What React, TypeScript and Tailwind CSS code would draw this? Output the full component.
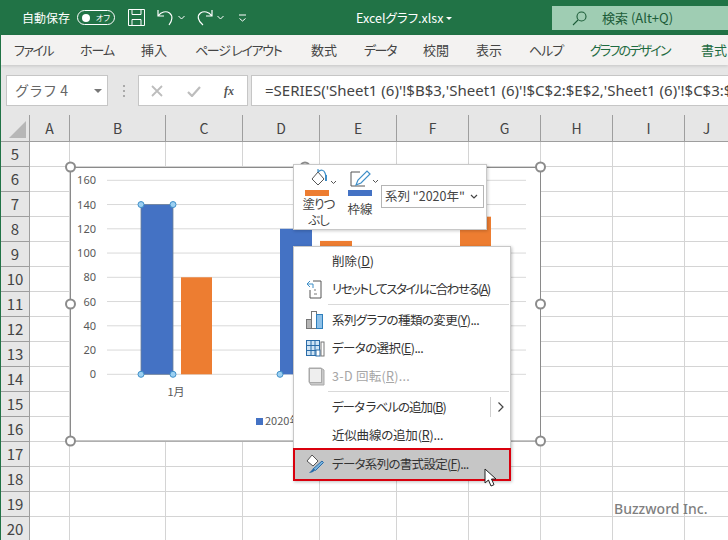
import React from "react";

const jp = "font-['Noto_Sans_CJK_JP','Noto_Sans',sans-serif] [font-feature-settings:'palt']";
const cols: [string, number][] = [["A",40],["B",96],["C",77],["D",77],["E",77],["F",72],["G",72],["H",72],["I",72],["J",44]];
const rows = [5,6,7,8,9,10,11,12,13,14,15,16,17,18,19,20];
const tabs: [string, string][] = [
  ["ファイル","ml-[13px] w-[66px] tracking-[-1.5px]"],["ホーム","w-[61px] tracking-[-1px]"],["挿入","w-[54px]"],["ページ レイアウト","w-[116px] tracking-[-1.3px]"],["数式","w-[53px]"],["データ","w-[59px] tracking-[-1.5px]"],["校閲","w-[53px]"],["表示","w-[53px]"],["ヘルプ","w-[61px] tracking-[-1px]"],
  ["グラフのデザイン","w-[111px] tracking-[-1.800px] text-[#1e6b41]"],["書式","w-[40px] text-[#1e6b41]"],
];

function Handle({x,y}:{x:number;y:number}){
  return <circle cx={x} cy={y} r={4.5} fill="#fff" stroke="#8c8c8c" strokeWidth={2}/>;
}
function Dot({x,y}:{x:number;y:number}){
  return <circle cx={x} cy={y} r={3} fill="#9cd0f2" stroke="#3f8fc8" strokeWidth={1}/>;
}

function Chart(){
  const ys=[0,20,40,60,80,100,120,140,160];
  const y=(v:number)=>374.3-v*1.2125;
  return (
    <svg width={728} height={540} viewBox="0 0 728 540" className="absolute left-0 top-[-141px] pointer-events-none">
      <rect x={70.5} y={167.5} width={470} height={273.5} fill="#fff" stroke="#8a8a8a" strokeWidth={1}/>
      {ys.map(v=><line key={v} x1={107} x2={526} y1={y(v)} y2={y(v)} stroke="#d9d9d9" strokeWidth={1}/>)}
      {ys.map(v=><text key={v} x={96} y={y(v)+4} textAnchor="end" fontSize={11} fill="#595959" fontFamily="'Noto Sans',sans-serif">{v}</text>)}
      <rect x={141} y={y(140)} width={32} height={140*1.2125} fill="#4472c4" stroke="#6d7f99" strokeWidth={0.8}/>
      <rect x={181} y={y(80)} width={31} height={80*1.2125} fill="#ed7d31"/>
      <rect x={280} y={y(120)} width={32} height={120*1.2125} fill="#4472c4"/>
      <rect x={320} y={y(110)} width={32} height={110*1.2125} fill="#ed7d31"/>
      <rect x={460} y={y(130)} width={31} height={130*1.2125} fill="#ed7d31"/>
      <Dot x={141} y={y(140)}/><Dot x={173} y={y(140)}/><Dot x={141} y={y(0)}/><Dot x={173} y={y(0)}/><Dot x={280} y={y(0)}/>
      <text x={176} y={396} textAnchor="middle" fontSize={11} fill="#595959" fontFamily="'Noto Sans CJK JP',sans-serif">1月</text>
      <rect x={256} y={418} width={7} height={7} fill="#4472c4"/>
      <text x={265} y={425} fontSize={11} fill="#595959" fontFamily="'Noto Sans CJK JP',sans-serif">2020年</text>
      <Handle x={70.5} y={167}/><Handle x={305} y={167}/><Handle x={540.5} y={167}/>
      <Handle x={70.5} y={304}/><Handle x={540.5} y={304}/>
      <Handle x={70.5} y={441}/><Handle x={305} y={441}/><Handle x={540.5} y={441}/>
    </svg>
  );
}

function Row({icon,label,u,tail,disabled,sel,sub,tr}:{icon?:React.ReactNode;label:string;u:string;tail?:string;disabled?:boolean;sel?:boolean;sub?:boolean;tr?:string}){
  return (
    <div className={`relative flex items-center pl-[38px] text-[12.5px] ${sel?"h-[31px]":"h-[28px]"} ${disabled?"text-[#a6a6a6]":"text-[#333]"} ${sel?"bg-[#c6c6c6] outline-2 outline-[#d9000d] -outline-offset-1":""}`}>
      {icon && <span className={`absolute left-[10px] w-[22px] h-[22px] ${sel?"top-[4px]":"top-[3px]"}`}>{icon}</span>}
      <span className={`whitespace-nowrap ${tr??""}`}>{label}(<span className="underline">{u}</span>){tail}</span>
      {sub && <span className="absolute right-[5px] top-[4px] h-[20px] flex items-center border-l border-[#d0d0d0] pl-[6px]"><svg width="8" height="12" viewBox="0 0 8 12"><path d="M1.5 1.5 6 6l-4.5 4.5" fill="none" stroke="#444" strokeWidth="1.2"/></svg></span>}
    </div>
  );
}

const Sep=()=><div className="ml-[34px] mr-[1px] my-[1px] h-px bg-[#d9d9d9]"/>;

export default function App(){
  return (
    <div className={`w-[728px] h-[540px] overflow-hidden bg-white border-l border-[#217346] ${jp}`}>
      {/* title bar */}
      <div className="relative h-[35px] bg-[#217346] text-white flex items-center text-[12px]">
        <span className="ml-[21px] w-[55px] whitespace-nowrap [font-feature-settings:normal]">自動保存</span>
        <span className="ml-[0px] w-[38px] h-[15px] rounded-full border border-white flex items-center justify-between pl-[4px] pr-[4px]">
          <span className="w-[8px] h-[8px] rounded-full bg-white"/>
          <span className="text-[8px] leading-none">オフ</span>
        </span>
        <svg className="ml-[13px]" width="17" height="17" viewBox="0 0 17 17" fill="none" stroke="#fff" strokeWidth="1"><path d="M.5.5h16v16H.5zM4 .5v5h9v-5M4 16.5v-6h9v6"/></svg>
        <svg className="ml-[12px]" width="17" height="17" viewBox="0 0 17 17" fill="none" stroke="#fff" strokeWidth="1.2"><path d="M1 1v6h6M1.5 6.5C4 3 9 1.500 12.500 4c3.500 2.600 3 7.500-.5 12"/></svg>
        <svg className="ml-[4px]" width="7" height="5" viewBox="0 0 7 5" fill="none" stroke="#fff"><path d="M.5 1 3.500 4l3-3"/></svg>
        <svg className="ml-[11px]" width="17" height="17" viewBox="0 0 17 17" fill="none" stroke="#fff" strokeWidth="1.2"><path d="M16 1v6h-6M15.500 6.500C13 3 8 1.500 4.500 4 1 6.600 1.500 11.500 7 16"/></svg>
        <svg className="ml-[4px]" width="7" height="5" viewBox="0 0 7 5" fill="none" stroke="#fff"><path d="M.5 1 3.500 4l3-3"/></svg>
        <svg className="ml-[15px]" width="7" height="8" viewBox="0 0 7 8" fill="none" stroke="#fff"><path d="M0 1h7M.5 4.500 3.500 7l3-2.500"/></svg>
        <span className="absolute left-[355px] top-[9px] whitespace-nowrap text-[12.5px] leading-[18px]">Excelグラフ.xlsx</span>
        <span className="absolute left-[445px] top-[17px] w-0 h-0 border-x-[3px] border-x-transparent border-t-[3px] border-t-white"/>
        <div className="absolute left-[551px] top-[6px] w-[177px] h-[24px] bg-[#9fcdb3] text-[#1c5c38] flex items-center">
          <svg className="ml-[20px]" width="15" height="15" viewBox="0 0 15 15" fill="none" stroke="#1c5c38" strokeWidth="1.100"><circle cx="9.500" cy="5.500" r="4.500"/><path d="M6 9 1 14"/></svg>
          <span className="ml-[15px] whitespace-nowrap text-[13px]">検索 (Alt+Q)</span>
        </div>
      </div>
      {/* tabs */}
      <div className="relative z-10 h-[30px] bg-[#f3f2f1] flex items-center text-[13px] text-[#444] shadow-[0_1px_3px_rgba(0,0,0,0.15)]">
        {tabs.map(([t,w])=><span key={t} className={`${w} shrink-0 whitespace-nowrap`}>{t}</span>)}
      </div>
      {/* formula bar */}
      <div className="h-[50px] bg-[#e6e6e6] flex items-center pl-[5px] pt-[1px]">
        <div className="w-[102px] h-[31px] bg-white border border-[#c6c6c6] flex items-center justify-between pl-[8px] pr-[5px] text-[14px] text-[#666] [font-feature-settings:normal]">
          <span>グラフ 4</span>
          <span className="w-0 h-0 border-x-[4px] border-x-transparent border-t-[4px] border-t-[#777]"/>
        </div>
        <span className="ml-[14px] w-[3px] h-[12px] flex flex-col justify-between items-center">
          <i className="w-[2px] h-[2px] bg-[#aaa]"/><i className="w-[2px] h-[2px] bg-[#aaa]"/><i className="w-[2px] h-[2px] bg-[#aaa]"/>
        </span>
        <div className="ml-[13px] w-[110px] h-[31px] bg-white border border-[#c6c6c6] flex items-center pl-[12px]">
          <svg width="12" height="12" viewBox="0 0 12 12" stroke="#bdbdbd" strokeWidth="1.800"><path d="M1 1l10 10M11 1 1 11"/></svg>
          <svg className="ml-[24px]" width="14" height="12" viewBox="0 0 14 12" fill="none" stroke="#bdbdbd" strokeWidth="2.200"><path d="M1 7l4 4 8-9"/></svg>
          <span className="ml-[23px] font-['Liberation_Serif',serif] italic font-bold text-[12px] text-[#555]">fx</span>
        </div>
        <div className="ml-[3px] flex-1 min-w-0 h-[31px] bg-white border border-r-0 border-[#c6c6c6] flex items-center pl-[13px] overflow-hidden text-[15px] text-[#444] whitespace-nowrap font-['Noto_Sans',sans-serif]">
          =SERIES('Sheet1 (6)'!$B$3,'Sheet1 (6)'!$C$2:$E$2,'Sheet1 (6)'!$C$3:$E$3,1)
        </div>
      </div>
      {/* sheet */}
      <div className="relative">
        <div className="flex h-[27px]">
          <div className="relative w-[29px] shrink-0 bg-[#e6e6e6] border-r border-b border-[#9e9e9e]">
            <span className="absolute right-[3px] bottom-[3px] w-0 h-0 border-l-[17px] border-l-transparent border-b-[17px] border-b-[#b7b7b7]"/>
          </div>
          {cols.map(([c,w])=>(
            <div key={c} style={{width:w}} className="shrink-0 bg-[#e6e6e6] border-r border-b border-[#9e9e9e] flex items-center justify-center text-[14px] text-[#444]">{c}</div>
          ))}
        </div>
        {rows.map(r=>(
          <div key={r} className="flex h-[25px]">
            <div className="w-[29px] shrink-0 bg-[#e6e6e6] border-r border-b border-[#9e9e9e] flex items-center justify-center text-[15px] text-[#444]">{r}</div>
            {cols.map(([c,w])=><div key={c} style={{width:w}} className="shrink-0 border-r border-b border-[#d4d4d4]"/>)}
          </div>
        ))}
        <div className="absolute left-[-1px] top-[26px] w-[728px] h-[400px]">
          <div className="absolute left-0 top-0"><Chart/></div>
        </div>
        {/* mini toolbar */}
        <div className="absolute left-[292px] top-[49px] w-[194px] h-[66px] bg-white border border-[#c8c8c8] shadow-[1px_1px_3px_rgba(0,0,0,0.2)] flex text-[12.5px] text-[#444]">
          <div className="relative w-[49px] flex flex-col items-center">
            <svg className="mt-[4px] ml-[2px]" width="34" height="20" viewBox="0 0 34 20" fill="none">
              <path d="M9 10l6-7 6 7-6 6z" stroke="#555" fill="#fff"/><path d="M15 3V0M15 3c3-3 6-2 7 1l1 3" stroke="#3f8fc8" strokeWidth="1.200"/><path d="M23 6v6" stroke="#3f8fc8" strokeWidth="2"/><path d="M28 12l2.500 2.500 2.500-2.500" stroke="#555"/>
            </svg>
            <span className="absolute left-[11px] top-[25px] w-[24px] h-[6px] bg-[#ed7d31]"/>
            <span className="mt-[7px] leading-[16px] text-center tracking-[-1px]">塗りつ<br/>ぶし</span>
          </div>
          <div className="relative w-[41px] flex flex-col items-center">
            <svg className="mt-[4px] ml-[-3px]" width="34" height="20" viewBox="0 0 34 20" fill="none">
              <path d="M6 3h9M6 3v14h14" stroke="#555"/><path d="M11 16l2-5 9-9 3 3-9 9z" stroke="#3f8fc8" fill="#fff" strokeWidth="1.200"/><path d="M28 11l2.500 2.500 2.500-2.500" stroke="#555"/>
            </svg>
            <span className="absolute left-[5px] top-[25px] w-[24px] h-[6px] bg-[#4472c4]"/>
            <span className="mt-[12px] ml-[-7px] leading-[16px]">枠線</span>
          </div>
          <div className="ml-[-3px] mt-[20px] w-[103px] h-[23px] border border-[#b5b5b5] flex items-center justify-between pl-[3px] pr-[5px] whitespace-nowrap">
            <span>系列 "2020年"</span>
            <svg width="8" height="5" viewBox="0 0 8 5" fill="none" stroke="#444" strokeWidth="1.200"><path d="M1 1l3 3 3-3"/></svg>
          </div>
        </div>
        {/* context menu */}
        <div className="absolute left-[292px] top-[131px] w-[218px] bg-white border border-[#c8c8c8] shadow-[1px_1px_3px_rgba(0,0,0,0.25)]">
          <Row label="削除" u="D"/>
          <Row label="リセットしてスタイルに合わせる" u="A" tr="tracking-[-1.500px]" icon={
            <svg viewBox="0 0 22 22" fill="none"><path d="M9 3h8v17H6v-8" stroke="#555"/><path d="M6 3 3 6l3 3M3 6h6v4" stroke="#3f8fc8"/><path d="M10 12h2M10 16h3" stroke="#777"/></svg>}/>
          <Sep/>
          <Row label="系列グラフの種類の変更" u="Y" tail="..." tr="tracking-[-0.600px]" icon={
            <svg viewBox="0 0 22 22"><rect x="2.500" y="10.500" width="5" height="9" fill="#b5b5b5" stroke="#777"/><rect x="7.500" y="2.500" width="5" height="17" fill="#fff" stroke="#777"/><rect x="12.500" y="5.500" width="6" height="14" fill="#8fc1e8" stroke="#2f7fbc"/></svg>}/>
          <Row label="データの選択" u="E" tail="..." tr="tracking-[-0.600px]" icon={
            <svg viewBox="0 0 22 22"><rect x="2.500" y="3.500" width="13" height="15" fill="#cfe4f5" stroke="#2b6ca8"/><path d="M2.500 8.500h13M2.500 13.500h13M7 3.500v15M11 3.500v15" stroke="#2b6ca8"/><rect x="12" y="13" width="4" height="6" fill="#fff" stroke="#2b6ca8"/><rect x="17" y="5" width="3" height="14" fill="#fff" stroke="#777"/></svg>}/>
          <Row label="3-D 回転" u="R" tail="..." disabled tr="tracking-[0.300px]" icon={
            <svg viewBox="0 0 22 22"><path d="M5 3h12l3 2v15H7l-2-3z" fill="#c9c9c9" stroke="#aaa"/><rect x="5.500" y="3.500" width="12" height="14" fill="#eee" stroke="#aaa"/></svg>}/>
          <Sep/>
          <Row label="データ ラベルの追加" u="B" sub tr="tracking-[-1px]"/>
          <Row label="近似曲線の追加" u="R" tail="..." tr="tracking-[-0.200px]"/>
          <Row sel label="データ系列の書式設定" u="F" tail="..." tr="tracking-[-0.700px]" icon={
            <svg viewBox="0 0 22 22" fill="none"><path d="M3 8l5-6 6 6-5 5z" stroke="#555" fill="#fff"/><path d="M9 16l9-8 1.500 1.500-8 8z" fill="#7ab3dd" stroke="#2b6ca8"/><path d="M5 20c2 0 5-1 6-3l-2-1.500c-1 2-3 3-4 4.500z" fill="#2b6ca8"/></svg>}/>
        </div>
        {/* cursor */}
        <svg className="absolute left-[483px] top-[353px]" width="14" height="20" viewBox="0 0 14 20"><path d="M1 1v14l3.500-3 2.500 6 3-1.300-2.500-5.700H12z" fill="#fff" stroke="#222" strokeWidth="1"/></svg>
        <div className="absolute left-[613px] top-[384px] leading-[20px] text-[14px] font-medium text-[#7f7f7f] font-['Noto_Sans',sans-serif] whitespace-nowrap">Buzzword Inc.</div>
      </div>
    </div>
  );
}
